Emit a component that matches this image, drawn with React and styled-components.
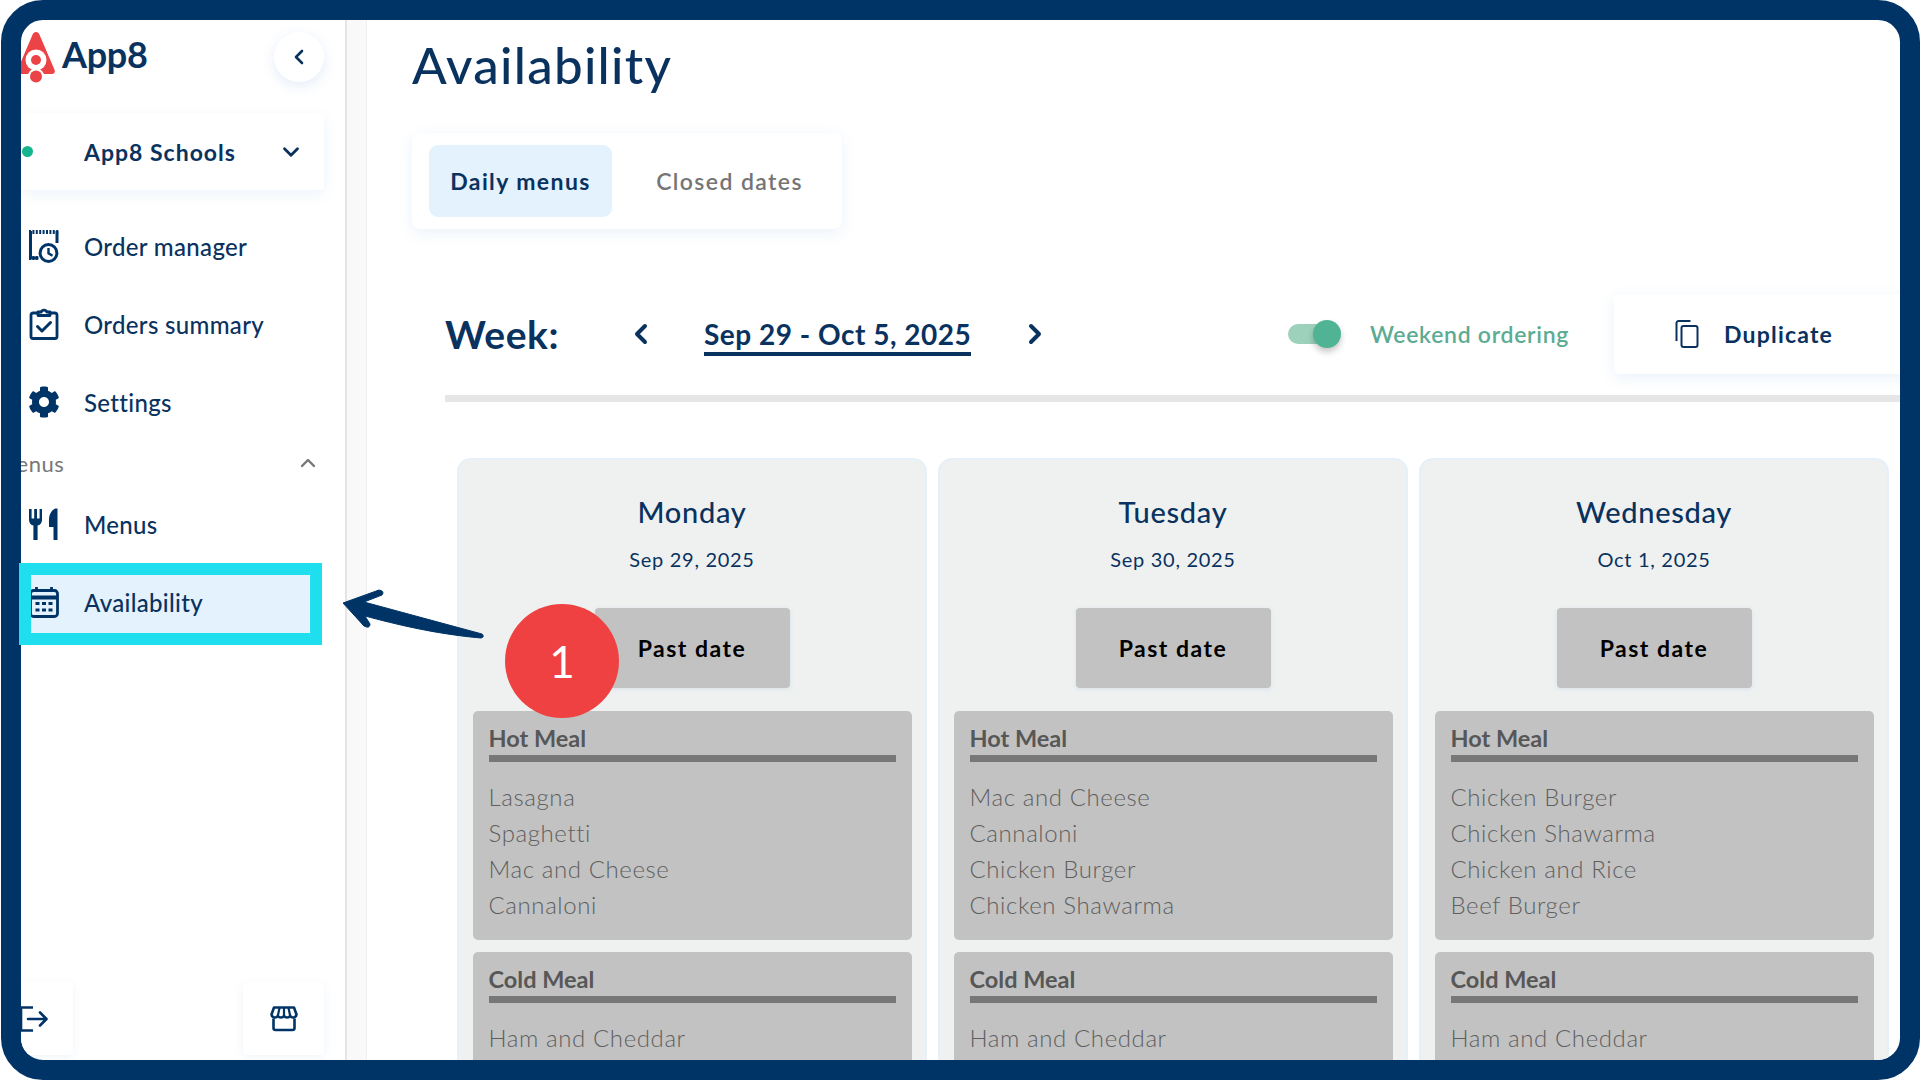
import React from 'react';
import styled, { createGlobalStyle } from 'styled-components';
import { ChevronLeft, ChevronRight, ChevronDown, ChevronUp } from 'lucide-react';

const NAVY = '#0a325f';
const FRAME = '#003467';
const SANS = '"Lato", "Open Sans", sans-serif';

const Global = createGlobalStyle`
  html, body { margin: 0; padding: 0; background: #fff; }
  body { width: 1920px; height: 1080px; overflow: hidden; font-family: ${SANS}; color: ${NAVY}; }
  * { box-sizing: border-box; }
`;

const Stage = styled.div`
  position: relative;
  width: 1920px;
  height: 1080px;
  background: #fff;
`;
const Frame = styled.div`
  display: flex;
  height: 1080px;
  margin-left: 1px;
  width: 1919px;
  border: 20px solid ${FRAME};
  border-radius: 42px;
  overflow: hidden;
  background: #fff;
`;
const Sidebar = styled.aside`
  flex: 0 0 324px;
  display: flex;
  flex-direction: column;
  height: 100%;
`;
const Brand = styled.div`
  height: 93px;
  padding: 0 21px 20px 0;
  display: flex;
  align-items: center;
`;
const Logo = styled.svg`
  width: 40px;
  height: 52px;
  margin-left: -5px;
  flex: none;
`;
const BrandName = styled.span`
  margin-left: 6px;
  font-size: 36px;
  font-weight: 700;
  letter-spacing: -0.3px;
  color: ${NAVY};
  margin-top: -6px;
`;
const CollapseButton = styled.button`
  margin-left: auto;
  width: 50px;
  height: 50px;
  border: 0;
  padding: 0;
  border-radius: 50%;
  background: #fff;
  color: ${NAVY};
  display: flex;
  align-items: center;
  justify-content: center;
  box-shadow: 0 4px 14px rgba(30, 110, 200, 0.12);
`;
const SchoolPicker = styled.div`
  height: 77px;
  width: 303px;
  flex: none;
  display: flex;
  align-items: center;
  background: #fff;
  box-shadow: 0 4px 14px rgba(30, 110, 200, 0.08);
  border-radius: 0 4px 4px 0;
  margin-bottom: 17px;
  padding-right: 20px;
`;
const StatusDot = styled.span`
  width: 11px;
  height: 11px;
  border-radius: 50%;
  background: #14b48c;
  margin-left: 1px;
`;
const SchoolName = styled.span`
  margin-left: 51px;
  font-size: 23px;
  font-weight: 700;
  letter-spacing: 1px;
  flex: 1;
`;
const NavRow = styled.div`
  height: 78px;
  width: ${p => (p.$active ? 288 : 303)}px;
  flex: none;
  display: flex;
  align-items: center;
  padding-left: 5px;
  gap: 22px;
  background: ${p => (p.$active ? '#e3f2fd' : 'transparent')};
`;
const NavIcon = styled.span`
  width: 36px;
  height: 36px;
  flex: none;
  display: flex;
  align-items: center;
  justify-content: center;
  color: ${FRAME};
`;
const NavLabel = styled.span`
  font-size: 24px;
  font-weight: 500;
  letter-spacing: 0.32px;
  color: ${NAVY};
`;
const SectionRow = styled.div`
  height: 44px;
  flex: none;
  display: flex;
  align-items: center;
  justify-content: space-between;
  margin-left: -25px;
  width: 328px;
  color: #777;
  font-size: 22px;
  font-weight: 400;
  letter-spacing: 0.5px;
`;
const SectionToggle = styled.span`
  display: flex;
  margin-right: 4px;
  color: #777;
`;
const SidebarSpacer = styled.div`
  flex: 1;
`;
const FooterRow = styled.div`
  display: flex;
  justify-content: space-between;
  width: 303px;
  height: 73px;
  margin-bottom: 5px;
  flex: none;
`;
const FooterButton = styled.button`
  width: ${p => p.$w}px;
  height: 73px;
  padding: 0;
  border: 0;
  border-radius: 4px;
  background: #fff;
  color: ${FRAME};
  display: flex;
  align-items: center;
  justify-content: ${p => (p.$start ? 'flex-start' : 'center')};
  box-shadow: 0 2px 10px rgba(30, 110, 200, 0.07);
`;
const Rail = styled.div`
  flex: 0 0 22px;
  height: 100%;
  background: #f9f9f9;
  border-left: 2px solid #e5e5e5;
  border-right: 1px solid #eee;
`;
const Main = styled.main`
  flex: 1;
  min-width: 0;
  height: 100%;
  padding: 0 0 0 45px;
  overflow: hidden;
`;
const Title = styled.h1`
  margin: 10px 0 0;
  font-size: 51px;
  line-height: 70px;
  font-weight: 500;
  letter-spacing: 1.3px;
  color: ${NAVY};
`;
const Tabs = styled.div`
  margin-top: 33px;
  width: 430px;
  height: 96px;
  padding: 12px 17px;
  display: flex;
  border-radius: 8px;
  box-shadow: 0 4px 16px rgba(30, 110, 200, 0.09);
`;
const Tab = styled.div`
  width: 183px;
  height: 72px;
  border-radius: 9px;
  display: flex;
  align-items: center;
  justify-content: center;
  font-size: 23px;
  font-weight: ${p => (p.$active ? 700 : 600)};
  letter-spacing: 1.4px;
  color: ${p => (p.$active ? NAVY : '#757575')};
  background: ${p => (p.$active ? '#e3f2fd' : 'transparent')};
  & + & { margin-left: 26px; }
`;
const WeekBar = styled.div`
  margin: 65px 0 0 33px;
  height: 80px;
  display: flex;
  align-items: center;
`;
const WeekLabel = styled.span`
  width: 178px;
  font-size: 39px;
  font-weight: 700;
  letter-spacing: 0.6px;
  color: ${NAVY};
`;
const WeekChevron = styled.span`
  display: flex;
  width: 36px;
  justify-content: center;
  color: ${NAVY};
`;
const WeekRange = styled.span`
  margin: 0 46px 0 45px;
  font-size: 28px;
  font-weight: 700;
  line-height: 36px;
  padding-top: 4px;
  border-bottom: 4px solid ${NAVY};
  letter-spacing: 0.5px;
  color: ${NAVY};
  white-space: nowrap;
`;
const ToggleTrack = styled.span`
  position: relative;
  margin-left: auto;
  width: 42px;
  height: 20px;
  border-radius: 10px;
  background: #9ed1bc;
`;
const ToggleThumb = styled.span`
  position: absolute;
  right: -11px;
  top: -4px;
  width: 28px;
  height: 28px;
  border-radius: 50%;
  background: #4fb394;
  box-shadow: 0 4px 6px rgba(0, 0, 0, 0.22);
`;
const ToggleLabel = styled.span`
  margin-left: 40px;
  font-size: 23px;
  font-weight: 600;
  letter-spacing: 0.7px;
  color: #5cab93;
`;
const DuplicateButton = styled.button`
  margin-left: 45px;
  margin-right: -10px;
  width: 296px;
  height: 80px;
  padding: 0 0 0 61px;
  display: flex;
  align-items: center;
  gap: 25px;
  border: 0;
  border-radius: 6px;
  background: #fff;
  color: ${NAVY};
  font-family: inherit;
  font-size: 23px;
  font-weight: 700;
  letter-spacing: 1.2px;
  box-shadow: 0 4px 16px rgba(30, 110, 200, 0.09);
`;
const Rule = styled.div`
  margin: 21px 0 0 33px;
  height: 7px;
  background: #e6e6e6;
`;
const Week = styled.div`
  margin: 56px 0 0 45px;
  display: flex;
  gap: 11px;
`;
const DayCard = styled.section`
  flex: 0 0 470px;
  height: 720px;
  padding: 0 13.500px;
  border: 2px solid #e6f0f8;
  border-radius: 14px;
  background: #eff1f0;
  display: flex;
  flex-direction: column;
  align-items: center;
`;
const DayName = styled.h2`
  margin: 32px 0 0;
  font-size: 29px;
  line-height: 40px;
  font-weight: 500;
  letter-spacing: 0.7px;
  color: ${NAVY};
`;
const DayDate = styled.div`
  margin-top: 13px;
  font-size: 20px;
  line-height: 28px;
  letter-spacing: 0.7px;
  color: ${NAVY};
`;
const PastButton = styled.div`
  margin-top: 35px;
  width: 195px;
  height: 80px;
  flex: none;
  border-radius: 4px;
  background: #c2c2c2;
  box-shadow: 0 1px 4px rgba(30, 110, 200, 0.12);
  display: flex;
  align-items: center;
  justify-content: center;
  color: #000;
  font-size: 23px;
  font-weight: 700;
  letter-spacing: 1.5px;
`;
const MealBox = styled.div`
  width: 100%;
  margin-top: ${p => p.$mt}px;
  min-height: 229px;
  padding: 12px 16px 11px 16px;
  flex: none;
  border-radius: 5px;
  background: #c2c2c2;
`;
const MealHeading = styled.h3`
  margin: 0;
  height: 39px;
  line-height: 30px;
  font-size: 23.500px;
  font-weight: 700;
  color: #575757;
  border-bottom: 7px solid #777;
`;
const MealList = styled.ul`
  list-style: none;
  margin: 17px 0 0;
  padding: 0;
`;
const MealItem = styled.li`
  font-size: 24px;
  line-height: 36px;
  font-weight: 300;
  letter-spacing: 0.6px;
  color: #5f5f5f;
  white-space: nowrap;
`;
const Annotation = styled.div`
  position: absolute;
  inset: 0;
  pointer-events: none;
`;
const Highlight = styled.div`
  position: absolute;
  left: 19px;
  top: 563px;
  width: 303px;
  height: 82px;
  border: 12px solid #1fdfef;
`;
const StepBadge = styled.div`
  position: absolute;
  left: 505px;
  top: 604px;
  width: 114px;
  height: 114px;
  border-radius: 50%;
  background: #ef4141;
  color: #fff;
  display: flex;
  align-items: center;
  justify-content: center;
  font-size: 44px;
  font-weight: 400;
`;
const ArrowMark = styled.svg`
  position: absolute;
  left: 335px;
  top: 580px;
  width: 160px;
  height: 60px;
`;

const OrderManagerIcon = () => (
  <svg width="32" height="34" viewBox="0 0 32 34" fill="none" stroke="currentColor" strokeWidth="3">
    <path d="M2.500 2v27h8M29 2v12" />
    <path d="M1 3h30" strokeWidth="4" strokeDasharray="2 1.400" />
    <path d="M1 29h9" strokeWidth="4" strokeDasharray="2 1.400" />
    <circle cx="20.500" cy="24" r="8.400" />
    <path d="M20.500 19v5.400l4 2.400" strokeWidth="2.400" />
  </svg>
);
const SummaryIcon = () => (
  <svg width="30" height="32" viewBox="0 0 30 32" fill="none" stroke="currentColor" strokeWidth="2.800" strokeLinejoin="round" strokeLinecap="round">
    <path d="M9 5H4a2 2 0 0 0-2 2v21.500a2 2 0 0 0 2 2h22a2 2 0 0 0 2-2V7a2 2 0 0 0-2-2h-5" />
    <path d="M9 7.500V4h3.200a3 3 0 0 1 5.600 0H21v3.500z" />
    <path d="M8.500 18.500l4.500 4.500 8.500-8.500" strokeWidth="3" />
  </svg>
);
const GearIcon = () => (
  <svg width="32" height="32" viewBox="0 0 512 512" fill="currentColor">
    <path d="M487.400 315.700l-42.600-24.600c4.300-23.200 4.300-47 0-70.200l42.600-24.600c4.900-2.800 7.100-8.600 5.500-14-11.100-35.600-30-67.800-54.700-94.600-3.800-4.100-10-5.100-14.800-2.300L380.800 110c-17.900-15.400-38.500-27.300-60.800-35.100V25.800c0-5.600-3.900-10.500-9.400-11.700-36.700-8.200-74.300-7.800-109.200 0-5.500 1.200-9.400 6.100-9.400 11.700V75c-22.200 7.900-42.800 19.800-60.800 35.100L88.700 85.500c-4.900-2.800-11-1.900-14.800 2.300-24.700 26.700-43.600 58.900-54.700 94.600-1.700 5.400.6 11.200 5.500 14L67.300 221c-4.300 23.200-4.300 47 0 70.200l-42.600 24.600c-4.900 2.800-7.100 8.600-5.500 14 11.100 35.600 30 67.800 54.700 94.600 3.800 4.100 10 5.100 14.800 2.300l42.600-24.600c17.900 15.400 38.500 27.300 60.800 35.100v49.200c0 5.600 3.900 10.500 9.400 11.700 36.700 8.200 74.300 7.800 109.200 0 5.500-1.200 9.400-6.100 9.400-11.700v-49.200c22.200-7.900 42.800-19.800 60.800-35.100l42.600 24.600c4.900 2.800 11 1.900 14.800-2.300 24.700-26.700 43.600-58.900 54.700-94.600 1.500-5.500-.7-11.300-5.600-14.100zM256 336c-44.100 0-80-35.900-80-80s35.900-80 80-80 80 35.900 80 80-35.900 80-80 80z" />
  </svg>
);
const CutleryIcon = () => (
  <svg width="30" height="32" viewBox="0 0 30 32" fill="currentColor">
    <path d="M0 1h2.600v9.500h2.600V1h2.800v9.500h2.600V1H13v11c0 3-2 5-4.400 5.600V32H4.400V17.600C2 17 0 15 0 12z" />
    <path d="M20 12c0-6 3-10.500 6.500-11.500H28.500V32H24.500V19H20z" />
  </svg>
);
const CalendarIcon = () => (
  <svg width="30" height="32" viewBox="0 0 30 32" fill="none" stroke="currentColor" strokeWidth="2.800">
    <rect x="1.500" y="4.500" width="27" height="26" rx="3" />
    <path d="M1.500 11.500h27" strokeWidth="4" />
    <path d="M7.500 1v5M22.500 1v5" />
    <path d="M6.500 17.500h4M13 17.500h4M19.500 17.500h4M6.500 24h4M13 24h4M19.500 24h4" strokeWidth="3.200" />
  </svg>
);
const ExitIcon = () => (
  <svg width="30" height="26" viewBox="0 0 30 26" fill="none" stroke="currentColor" strokeWidth="2.600" strokeLinecap="round" strokeLinejoin="round">
    <path d="M12 1.500H0v23h12" strokeLinecap="butt" strokeLinejoin="miter" />
    <path d="M7 13h18M19 6.500l6.500 6.500-6.500 6.500" />
  </svg>
);
const StoreIcon = () => (
  <svg width="28" height="26" viewBox="0 0 28 26" fill="none" stroke="currentColor" strokeWidth="2.600" strokeLinejoin="round">
    <path d="M4 1.500h20l2.500 7a3.400 3.400 0 0 1-6.300 1.300 3.600 3.600 0 0 1-6.200 0 3.600 3.600 0 0 1-6.200 0A3.400 3.400 0 0 1 1.500 8.500z" />
    <path d="M9.500 2l-1.700 8M14 2v8M18.500 2l1.700 8" strokeWidth="2.200" />
    <path d="M3.500 12.500V22a2 2 0 0 0 2 2h17a2 2 0 0 0 2-2v-9.500" />
  </svg>
);
const CopyIcon = () => (
  <svg width="24" height="28" viewBox="0 0 24 28" fill="none" stroke="currentColor" strokeWidth="2" strokeLinejoin="round">
    <rect x="6.500" y="6" width="16" height="21" rx="2" />
    <path d="M1.500 21V3a2 2 0 0 1 2-2h12" />
  </svg>
);

const days = [
  { name: 'Monday', date: 'Sep 29, 2025', hot: ['Lasagna', 'Spaghetti', 'Mac and Cheese', 'Cannaloni'] },
  { name: 'Tuesday', date: 'Sep 30, 2025', hot: ['Mac and Cheese', 'Cannaloni', 'Chicken Burger', 'Chicken Shawarma'] },
  { name: 'Wednesday', date: 'Oct 1, 2025', hot: ['Chicken Burger', 'Chicken Shawarma', 'Chicken and Rice', 'Beef Burger'] },
];

export default function App() {
  return (
    <Stage>
      <Global />
      <Frame>
        <Sidebar>
          <Brand>
            <Logo viewBox="0 0 40 52" aria-hidden="true">
              <path fill="#ec4346" d="M20 1c1.500 0 2.800 1 3.500 2.800l15 35c1 2.300-.3 4.200-2.300 4.200H3.800c-2 0-3.300-1.900-2.300-4.200l15-35C17.200 2 18.500 1 20 1z" />
              <circle cx="20" cy="29" r="10.500" fill="#fff" />
              <circle cx="20" cy="46" r="8.500" fill="#fff" />
              <circle cx="20" cy="29" r="5" fill="#ec4346" />
              <circle cx="20" cy="45.500" r="6" fill="#ec4346" />
            </Logo>
            <BrandName>App8</BrandName>
            <CollapseButton aria-label="Collapse"><ChevronLeft size={24} strokeWidth={2.600} /></CollapseButton>
          </Brand>
          <SchoolPicker>
            <StatusDot />
            <SchoolName>App8 Schools</SchoolName>
            <ChevronDown size={26} strokeWidth={2.600} />
          </SchoolPicker>
          <NavRow><NavIcon><OrderManagerIcon /></NavIcon><NavLabel>Order manager</NavLabel></NavRow>
          <NavRow><NavIcon><SummaryIcon /></NavIcon><NavLabel>Orders summary</NavLabel></NavRow>
          <NavRow><NavIcon><GearIcon /></NavIcon><NavLabel>Settings</NavLabel></NavRow>
          <SectionRow>
            <span>Menus</span>
            <SectionToggle><ChevronUp size={24} strokeWidth={2.400} /></SectionToggle>
          </SectionRow>
          <NavRow><NavIcon><CutleryIcon /></NavIcon><NavLabel>Menus</NavLabel></NavRow>
          <NavRow $active><NavIcon><CalendarIcon /></NavIcon><NavLabel>Availability</NavLabel></NavRow>
          <SidebarSpacer />
          <FooterRow>
            <FooterButton $w={52} $start aria-label="Log out"><ExitIcon /></FooterButton>
            <FooterButton $w={81} aria-label="Store"><StoreIcon /></FooterButton>
          </FooterRow>
        </Sidebar>
        <Rail />
        <Main>
          <Title>Availability</Title>
          <Tabs>
            <Tab $active>Daily menus</Tab>
            <Tab>Closed dates</Tab>
          </Tabs>
          <WeekBar>
            <WeekLabel>Week:</WeekLabel>
            <WeekChevron><ChevronLeft size={32} strokeWidth={3} /></WeekChevron>
            <WeekRange>Sep 29 - Oct 5, 2025</WeekRange>
            <WeekChevron><ChevronRight size={32} strokeWidth={3} /></WeekChevron>
            <ToggleTrack><ToggleThumb /></ToggleTrack>
            <ToggleLabel>Weekend ordering</ToggleLabel>
            <DuplicateButton><CopyIcon />Duplicate</DuplicateButton>
          </WeekBar>
          <Rule />
          <Week>
            {days.map(d => (
              <DayCard key={d.name}>
                <DayName>{d.name}</DayName>
                <DayDate>{d.date}</DayDate>
                <PastButton>Past date</PastButton>
                <MealBox $mt={23}>
                  <MealHeading>Hot Meal</MealHeading>
                  <MealList>{d.hot.map(i => <MealItem key={i}>{i}</MealItem>)}</MealList>
                </MealBox>
                <MealBox $mt={12}>
                  <MealHeading>Cold Meal</MealHeading>
                  <MealList><MealItem>Ham and Cheddar</MealItem></MealList>
                </MealBox>
              </DayCard>
            ))}
          </Week>
        </Main>
      </Frame>
      <Annotation>
        <Highlight />
        <ArrowMark viewBox="0 0 160 60">
          <path fill={FRAME} stroke={FRAME} strokeWidth="1" strokeLinejoin="round" d="M8 23 L44 10 Q50 11 47 15 L29 22 L147 54 Q150 57 146 58 C100 54 60 44 30 36 L35 44 Q35 49 29 46 Z" />
        </ArrowMark>
        <StepBadge>1</StepBadge>
      </Annotation>
    </Stage>
  );
}
